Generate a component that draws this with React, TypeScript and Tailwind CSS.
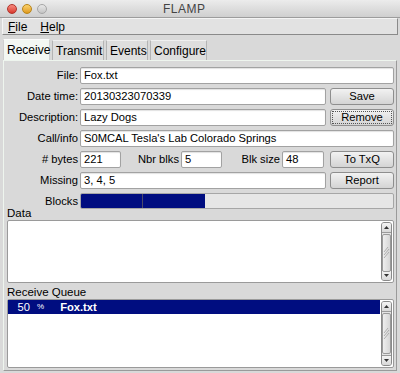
import React from "react";

const inputCls =
  "h-[17px] bg-white border border-[#a2a2a2] rounded-[2px] shadow-[inset_0_1px_1px_rgba(0,0,0,0.12)] px-[3px] leading-[15px] whitespace-nowrap overflow-hidden";
const btnCls =
  "h-[17px] w-[64px] shrink-0 rounded-[3px] border border-[#8e8e8e] bg-gradient-to-b from-[#f2f2f2] to-[#d4d4d4] flex items-center justify-center leading-[15px]";

function Label({ children, w = "w-[76px]" }: { children: React.ReactNode; w?: string }) {
  return <div className={`${w} shrink-0 text-right pr-[2px] leading-[17px]`}>{children}</div>;
}

function Scrollbar({ thumbTop, thumbH }: { thumbTop: number; thumbH: number }) {
  return (
    <div className="absolute right-[1px] top-[1px] bottom-[1px] w-[11px] rounded-[3px] border border-[#8a8a8a] bg-[#e4e4e4] flex flex-col">
      <div className="h-[10px] border-b border-[#9a9a9a] flex items-center justify-center bg-gradient-to-b from-[#f4f4f4] to-[#d8d8d8] rounded-t-[2px]">
        <svg width="5" height="3" viewBox="0 0 5 3"><path d="M0 3 L2.5 0 L5 3 Z" fill="#333" /></svg>
      </div>
      <div className="flex-1 relative">
        <div
          className="absolute left-0 right-0 rounded-[2px] border border-[#9a9a9a] bg-gradient-to-r from-[#eeeeee] to-[#d6d6d6] flex items-center justify-center"
          style={{ top: thumbTop, height: thumbH }}
        >
          <svg width="7" height="14" viewBox="0 0 7 14">
            <path d="M1 9 L6 3 M1 12 L6 6 M1 6 L5 1" stroke="#a0a0a0" strokeWidth="0.8" />
          </svg>
        </div>
      </div>
      <div className="h-[10px] border-t border-[#9a9a9a] flex items-center justify-center bg-gradient-to-b from-[#f4f4f4] to-[#d8d8d8] rounded-b-[2px]">
        <svg width="5" height="3" viewBox="0 0 5 3"><path d="M0 0 L2.5 3 L5 0 Z" fill="#333" /></svg>
      </div>
    </div>
  );
}

export default function App() {
  return (
    <div
      className="w-[400px] h-[373px] bg-[#d9d9d9] flex flex-col text-[11.2px] text-black overflow-hidden"
      style={{ fontFamily: '"Liberation Sans", Arial, sans-serif' }}
    >
      {/* Title bar */}
      <div className="h-[18px] shrink-0 bg-gradient-to-b from-[#ececec] to-[#cfcfcf] border-b border-[#9c9c9c] flex items-center relative">
        <div className="flex items-center gap-[5px] pl-[7px]">
          <div className="w-[10px] h-[10px] rounded-full bg-gradient-to-b from-[#f7897f] to-[#d9372d] border border-[#b0332a]" />
          <div className="w-[10px] h-[10px] rounded-full bg-gradient-to-b from-[#fbd36b] to-[#e09a18] border border-[#b88419]" />
          <div className="w-[10px] h-[10px] rounded-full bg-gradient-to-b from-[#e8e8e8] to-[#c4c4c4] border border-[#a6a6a6]" />
        </div>
        <div className="absolute left-[163px] top-0 h-[18px] leading-[18px] text-[12px] text-[#444] tracking-[0.5px]">FLAMP</div>
      </div>

      {/* Menu bar */}
      <div className="mx-[2px] mt-[0px] h-[17px] shrink-0 bg-[#e2e2e2] border border-t-[#f4f4f4] border-l-[#f4f4f4] border-b-[#8a8a8a] border-r-[#8a8a8a] flex items-center gap-[13px] pl-[5px] text-[12px]">
        <span><span className="underline">F</span>ile</span>
        <span><span className="underline">H</span>elp</span>
      </div>

      {/* Tabs */}
      <div className="mt-[4px] h-[21px] shrink-0 flex items-end pl-[3px] gap-[2px] text-[12px]">
        <div className="h-[21px] w-[47px] bg-[#f3f7f3] border border-b-0 border-[#cfcfcf] border-t-[#fbfbfb] flex items-center pl-[3px]">Receive</div>
        <div className="h-[20px] w-[52px] bg-[#dedede] border border-b-0 border-[#b4b4b4] border-t-[#f0f0f0] flex items-center pl-[3px]">Transmit</div>
        <div className="h-[20px] w-[42px] bg-[#dedede] border border-b-0 border-[#b4b4b4] border-t-[#f0f0f0] flex items-center pl-[3px]">Events</div>
        <div className="h-[20px] w-[57px] bg-[#dedede] border border-b-0 border-[#b4b4b4] border-t-[#f0f0f0] flex items-center pl-[3px]">Configure</div>
      </div>

      {/* Panel */}
      <div className="mx-[3px] h-[311px] shrink-0 border border-t-[#eef5ee] border-l-[#eef5ee] border-b-[#9a9a9a] border-r-[#9a9a9a] bg-[#d9d9d9] flex flex-col pt-[6px] pr-[2px]">
        <div className="flex flex-col gap-[4px]">
          <div className="flex items-center">
            <Label>File:</Label>
            <div className={`${inputCls} flex-1`}>Fox.txt</div>
          </div>
          <div className="flex items-center gap-[4px]">
            <Label>Date time:</Label>
            <div className={`${inputCls} flex-1 -ml-[4px]`}>20130323070339</div>
            <div className={btnCls}>Save</div>
          </div>
          <div className="flex items-center gap-[4px]">
            <Label>Description:</Label>
            <div className={`${inputCls} flex-1 -ml-[4px]`}>Lazy Dogs</div>
            <div className={`${btnCls} p-[1px]`}>
              <div className="w-full h-full border border-dotted border-[#555] flex items-center justify-center leading-[11px]">Remove</div>
            </div>
          </div>
          <div className="flex items-center">
            <Label>Call/info</Label>
            <div className={`${inputCls} flex-1`}>S0MCAL Tesla's Lab Colorado Springs</div>
          </div>
          <div className="flex items-center">
            <Label># bytes</Label>
            <div className={`${inputCls} w-[41px]`}>221</div>
            <Label w="w-[60px]">Nbr blks</Label>
            <div className={`${inputCls} w-[41px]`}>5</div>
            <Label w="w-[60px]">Blk size</Label>
            <div className={`${inputCls} w-[42px]`}>48</div>
            <div className="flex-1" />
            <div className={btnCls}>To TxQ</div>
          </div>
          <div className="flex items-center gap-[4px]">
            <Label>Missing</Label>
            <div className={`${inputCls} flex-1 -ml-[4px]`}>3, 4, 5</div>
            <div className={btnCls}>Report</div>
          </div>
          <div className="flex items-center h-[16px]">
            <Label>Blocks</Label>
            <div className="h-[16px] flex-1 border border-[#a6a6a6] rounded-[2px] bg-[#e6e6e6] flex overflow-hidden">
              <div className="w-[62px] h-full bg-[#000d80] border-r border-[#4a4a6a]" />
              <div className="w-[62px] h-full bg-[#000d80]" />
            </div>
          </div>
        </div>

        <div className="pl-[3px] h-[13px] leading-[13px] mt-[-2px] text-[11.5px]">Data</div>
        <div className="ml-[3px] mt-[0px] h-[63px] relative bg-white border border-[#9a9a9a] rounded-[2px]">
          <Scrollbar thumbTop={1} thumbH={38} />
        </div>

        <div className="pl-[3px] h-[13px] leading-[13px] mt-[3px] text-[11.5px]">Receive Queue</div>
        <div className="ml-[3px] mt-[0px] h-[69px] relative bg-white border border-[#9a9a9a] rounded-[2px]">
          <div className="h-[14px] bg-[#000d80] text-white flex items-center leading-[14px] mr-[13px]">
            <span className="w-[22px] text-right">50</span>
            <span className="ml-[7px] text-[8px]">%</span>
            <span className="ml-[16px] font-bold">Fox.txt</span>
          </div>
          <Scrollbar thumbTop={1} thumbH={41} />
        </div>
      </div>
    </div>
  );
}
